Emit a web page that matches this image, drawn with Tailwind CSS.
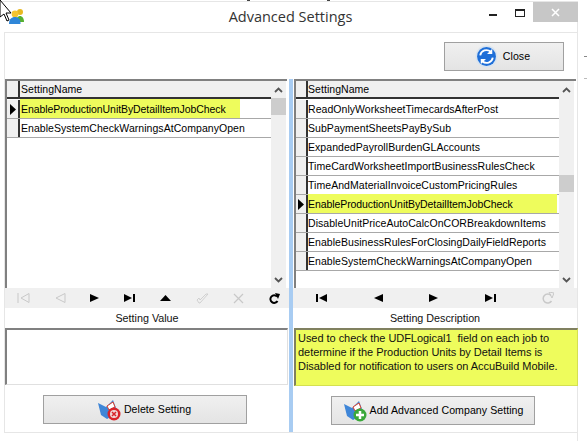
<!DOCTYPE html>
<html lang="en">
<head>
    <meta charset="UTF-8">
    <title>Advanced Settings</title>
    <script src="https://cdn.jsdelivr.net/npm/@tailwindcss/browser@4"></script>
</head>
<body class="bg-white overflow-hidden">
<div class="relative w-[587px] h-[441px] overflow-hidden bg-white text-black text-[10.5px] tracking-[0.05px] font-['Liberation_Sans',sans-serif]">

    <!-- Window -->
    <div class="w-[578px] h-[441px] mt-px border-t border-b border-r border-[#e6e6e6] flex flex-col">
        <!-- Title bar -->
        <div class="relative h-[30px] flex items-center justify-center text-[14.5px] tracking-normal text-[#333] font-['Open_Sans',sans-serif] pl-[4px]">
            Advanced Settings
            <svg class="absolute left-[8px] top-[6px] w-[16px] h-[17px]" viewBox="0 0 16 17">
                <circle cx="12" cy="4" r="3" fill="#e8b820"/>
                <path d="M8 14c0-4 2-6 4-6s4 2 4 6z" fill="#55b030"/>
                <circle cx="7" cy="6" r="3.4" fill="#f4c430"/>
                <path d="M1 16c0-5 2.500-7 6-7s5.500 2 5.500 7z" fill="#2f86d8"/>
            </svg>
            <div class="absolute left-[489px] top-[12px] w-[8px] h-[2px] bg-[#222]"></div>
            <div class="absolute left-[515px] top-[7px] w-[10px] h-[8px] border border-t-2 border-[#222]"></div>
            <div class="absolute left-[533px] top-0 w-[45px] h-[20px] bg-[#c7c7c7] flex items-center justify-center">
                <svg class="w-[9px] h-[9px]" viewBox="0 0 9 9"><path d="M1 1l7 7M8 1l-7 7" stroke="#fff" stroke-width="1.500"/></svg>
            </div>
        </div>

        <!-- Client area -->
        <div class="ml-[4px] w-[574px] h-[401px] border border-[#e6e6e6] flex flex-col">
            <div class="h-[46px] flex justify-end items-start pt-[9px] pr-[13px]">
                <button class="w-[120px] h-[29px] border border-[#a0a0a0] bg-gradient-to-b from-[#f0f0f0] to-[#e4e4e4] flex items-center justify-center gap-[5px] text-[10.6px] pr-[3px]">
                    <svg class="w-[23px] h-[23px]" viewBox="0 0 22 22">
                        <circle cx="11" cy="11" r="10.500" fill="#d8e4f0"/>
                        <circle cx="11" cy="11" r="9" fill="#1f6fd8"/>
                        <path d="M5 10a6 6 0 0 1 10-3.500M17 12a6 6 0 0 1-10 3.500" fill="none" stroke="#fff" stroke-width="1.800"/>
                        <path d="M16.500 3.500v5h-5zM5.500 18.500v-5h5z" fill="#fff"/>
                    </svg>
                    Close
                </button>
            </div>

            <div class="flex-1 flex">
                <!-- Left column -->
                <div class="w-[284px] shrink-0 flex flex-col">
                    <div class="h-[209px] mr-[2px] border-t-2 border-l-2 border-[#808080] flex bg-white">
                        <div class="flex-1 flex flex-col">
                            <div class="h-[19px] flex bg-[#f0f0f0] border-b border-white">
                                <div class="w-[13px] border-r-2 border-[#333] border-b-2 border-b-[#333]"></div>
                                <div class="flex-1 pl-[1px] leading-[17px] border-b-2 border-[#333]">SettingName</div>
                            </div>
                            <div class="h-[19px] flex border-b border-[#a8a8a8]">
                                <div class="w-[13px] bg-[#f0f0f0] border-r-2 border-[#333] flex items-center justify-center">
                                    <svg class="w-[6px] h-[11px]" viewBox="0 0 6 11"><path d="M0 0l6 5.500-6 5.500z" fill="#000"/></svg>
                                </div>
                                <div class="pl-[1px] pr-[14px] bg-[#eefc5c] leading-[20px] -mt-px h-[19px] tracking-[-0.08px]">EnableProductionUnitByDetailItemJobCheck</div>
                            </div>
                            <div class="h-[19px] flex border-b border-[#a8a8a8]">
                                <div class="w-[13px] bg-[#f0f0f0] border-r-2 border-[#333]"></div>
                                <div class="pl-[1px] leading-[18px]">EnableSystemCheckWarningsAtCompanyOpen</div>
                            </div>
                        </div>
                        <div class="w-[15px] mr-[1px] bg-[#f0f0f0] flex flex-col justify-between items-center relative">
                            <svg class="w-[9px] h-[6px] mt-[6px]" viewBox="0 0 9 6"><path d="M1 5l3.500-3.500L8 5" fill="none" stroke="#555" stroke-width="1.800"/></svg>
                            <div class="absolute top-[17px] left-0 w-[15px] h-[17px] bg-[#cdcdcd]"></div>
                            <svg class="w-[9px] h-[6px] mb-[5px]" viewBox="0 0 9 6"><path d="M1 1l3.500 3.500L8 1" fill="none" stroke="#555" stroke-width="1.800"/></svg>
                        </div>
                    </div>
                    <!-- Left navigator -->
                    <div class="h-[20px] bg-[#f0f0f0] flex items-center justify-between pl-[12px] pr-[9px]">
                        <svg class="w-[13px] h-[10px]" viewBox="0 0 13 10"><path d="M1 0v10M12 0.500L4 5l8 4.500z" fill="none" stroke="#c8c8c8"/></svg>
                        <svg class="w-[11px] h-[10px]" viewBox="0 0 11 10"><path d="M10 0.500L1 5l9 4.500z" fill="none" stroke="#c8c8c8"/></svg>
                        <svg class="w-[9px] h-[8px]" viewBox="0 0 9 8"><path d="M0 0l9 4-9 4z" fill="#000"/></svg>
                        <svg class="w-[11px] h-[8px]" viewBox="0 0 11 8"><path d="M0 0l8 4-8 4zM9 0h2v8H9z" fill="#000"/></svg>
                        <svg class="w-[11px] h-[6px]" viewBox="0 0 11 6"><path d="M0 6l5.500-6L11 6z" fill="#000"/></svg>
                        <svg class="w-[13px] h-[11px]" viewBox="0 0 13 11"><path d="M1 7l2 3 1 0L12 1l-2 0L4 7 3 5z" fill="none" stroke="#c8c8c8" stroke-width="0.800"/></svg>
                        <svg class="w-[11px] h-[11px]" viewBox="0 0 11 11"><path d="M1 1l9 9M10 1l-9 9" fill="none" stroke="#c8c8c8" stroke-width="1.200"/></svg>
                        <svg class="w-[11px] h-[11px]" viewBox="0 0 11 11"><path d="M8 3.500A3.800 3.800 0 1 0 8.500 8" fill="none" stroke="#000" stroke-width="2"/><path d="M6 0l5 1-2 5z" fill="#000"/></svg>
                    </div>
                    <div class="h-[20px] flex items-center justify-center text-[10.75px] tracking-normal text-[#111]">Setting Value</div>
                    <div class="h-[57px] mr-[1px] border-t-2 border-l-2 border-[#808080] border-r border-b border-r-[#e0e0e0] border-b-[#e0e0e0] bg-white"></div>
                    <div class="flex-1 flex items-start pt-[10px] pl-[38px]">
                        <button class="w-[204px] h-[29px] border border-[#a0a0a0] bg-gradient-to-b from-[#f0f0f0] to-[#e4e4e4] flex items-center justify-center gap-[3px] text-[10.6px] pr-[2px]">
                            <svg class="w-[24px] h-[22px]" viewBox="0 0 24 22">
                                <path d="M1 4l8 4 7-7 3 8v6l-9 5-6-4z" fill="#3f86d8"/>
                                <path d="M10 7l6-4 2 5-6 3z" fill="#fff" stroke="#d8402f"/>
                                <circle cx="17" cy="15" r="6.500" fill="#d8242a"/>
                                <circle cx="17" cy="15" r="4" fill="#f0d8d8"/>
                                <path d="M15 13l4 4M19 13l-4 4" stroke="#d8242a" stroke-width="1.500"/>
                            </svg>
                            Delete Setting
                        </button>
                    </div>
                </div>

                <!-- Splitter -->
                <div class="w-[4px] shrink-0 bg-[#a8ccf2]"></div>

                <!-- Right column -->
                <div class="flex-1 min-w-0 flex flex-col">
                    <div class="h-[209px] ml-[1px] mr-[1px] border-t-2 border-l-2 border-[#808080] flex bg-white">
                        <div class="flex-1 flex flex-col">
                            <div class="h-[19px] flex bg-[#f0f0f0] border-b border-white">
                                <div class="w-[12px] border-r-2 border-[#333] border-b-2 border-b-[#333]"></div>
                                <div class="flex-1 leading-[17px] border-b-2 border-[#333]">SettingName</div>
                            </div>
                            <div class="h-[19px] flex border-b border-[#a8a8a8]"><div class="w-[12px] bg-[#f0f0f0] border-r-2 border-[#333]"></div><div class="leading-[18px]">ReadOnlyWorksheetTimecardsAfterPost</div></div>
                            <div class="h-[19px] flex border-b border-[#a8a8a8]"><div class="w-[12px] bg-[#f0f0f0] border-r-2 border-[#333]"></div><div class="leading-[18px]">SubPaymentSheetsPayBySub</div></div>
                            <div class="h-[19px] flex border-b border-[#a8a8a8]"><div class="w-[12px] bg-[#f0f0f0] border-r-2 border-[#333]"></div><div class="leading-[18px]">ExpandedPayrollBurdenGLAccounts</div></div>
                            <div class="h-[19px] flex border-b border-[#a8a8a8]"><div class="w-[12px] bg-[#f0f0f0] border-r-2 border-[#333]"></div><div class="leading-[18px]">TimeCardWorksheetImportBusinessRulesCheck</div></div>
                            <div class="h-[19px] flex border-b border-[#a8a8a8]"><div class="w-[12px] bg-[#f0f0f0] border-r-2 border-[#333]"></div><div class="leading-[18px]">TimeAndMaterialInvoiceCustomPricingRules</div></div>
                            <div class="h-[19px] flex border-b border-[#a8a8a8]">
                                <div class="w-[12px] bg-[#f0f0f0] border-r-2 border-[#333] flex items-center justify-center">
                                    <svg class="w-[6px] h-[11px]" viewBox="0 0 6 11"><path d="M0 0l6 5.500-6 5.500z" fill="#000"/></svg>
                                </div>
                                <div class="pr-[44px] bg-[#eefc5c] leading-[20px] -mt-px h-[19px] tracking-[-0.08px]">EnableProductionUnitByDetailItemJobCheck</div>
                            </div>
                            <div class="h-[19px] flex border-b border-[#a8a8a8]"><div class="w-[12px] bg-[#f0f0f0] border-r-2 border-[#333]"></div><div class="leading-[18px]">DisableUnitPriceAutoCalcOnCORBreakdownItems</div></div>
                            <div class="h-[19px] flex border-b border-[#a8a8a8]"><div class="w-[12px] bg-[#f0f0f0] border-r-2 border-[#333]"></div><div class="leading-[18px]">EnableBusinessRulesForClosingDailyFieldReports</div></div>
                            <div class="h-[19px] flex border-b border-[#a8a8a8]"><div class="w-[12px] bg-[#f0f0f0] border-r-2 border-[#333]"></div><div class="leading-[18px]">EnableSystemCheckWarningsAtCompanyOpen</div></div>
                        </div>
                        <div class="w-[15px] mr-[2px] bg-[#f0f0f0] flex flex-col justify-between items-center relative">
                            <svg class="w-[9px] h-[6px] mt-[6px]" viewBox="0 0 9 6"><path d="M1 5l3.500-3.500L8 5" fill="none" stroke="#555" stroke-width="1.800"/></svg>
                            <div class="absolute top-[94px] left-0 w-[15px] h-[17px] bg-[#cdcdcd]"></div>
                            <svg class="w-[9px] h-[6px] mb-[5px]" viewBox="0 0 9 6"><path d="M1 1l3.500 3.500L8 1" fill="none" stroke="#555" stroke-width="1.800"/></svg>
                        </div>
                    </div>
                    <!-- Right navigator -->
                    <div class="h-[20px] bg-[#f0f0f0] flex items-center justify-between pl-[23px] pr-[23px]">
                        <svg class="w-[11px] h-[8px]" viewBox="0 0 11 8"><path d="M0 0h2v8H0zM11 0L3 4l8 4z" fill="#000"/></svg>
                        <svg class="w-[9px] h-[8px]" viewBox="0 0 9 8"><path d="M9 0L0 4l9 4z" fill="#000"/></svg>
                        <svg class="w-[9px] h-[8px]" viewBox="0 0 9 8"><path d="M0 0l9 4-9 4z" fill="#000"/></svg>
                        <svg class="w-[11px] h-[8px]" viewBox="0 0 11 8"><path d="M0 0l8 4-8 4zM9 0h2v8H9z" fill="#000"/></svg>
                        <svg class="w-[12px] h-[12px]" viewBox="0 0 12 12"><path d="M9 3.500A4.500 4.500 0 1 0 9.500 9" fill="none" stroke="#c8c8c8" stroke-width="1.500"/><path d="M7 0l5 1-2 5z" fill="none" stroke="#c8c8c8"/></svg>
                    </div>
                    <div class="h-[20px] flex items-center justify-center text-[10.75px] tracking-normal text-[#111]">Setting Description</div>
                    <div class="h-[58px] -mr-[1px] ml-[1px] bg-[#eefc5c] border-t-2 border-l-2 border-[#808060] border-r border-b border-r-[#d4e050] border-b-[#d4e050] pl-[2px] pt-[1px] text-[11px] leading-[14px] tracking-[-0.04px] text-[#111]">
                        Used to check the UDFLogical1&nbsp; field on each job to<br>
                        determine if the Production Units by Detail Items is<br>
                        Disabled for notification to users on AccuBuild Mobile.
                    </div>
                    <div class="flex-1 flex items-start pt-[10px] pl-[38px]">
                        <button class="w-[204px] h-[29px] border border-[#a0a0a0] bg-gradient-to-b from-[#f0f0f0] to-[#e4e4e4] flex items-center justify-center gap-[3px] text-[10.6px]">
                            <svg class="w-[24px] h-[22px]" viewBox="0 0 24 22">
                                <path d="M1 4l8 4 7-7 3 8v6l-9 5-6-4z" fill="#3f86d8"/>
                                <path d="M10 7l6-4 2 5-6 3z" fill="#fff" stroke="#d8402f"/>
                                <circle cx="17" cy="15" r="6.500" fill="#3aa83a"/>
                                <path d="M17 11v8M13 15h8" stroke="#fff" stroke-width="2.500"/>
                            </svg>
                            Add Advanced Company Setting
                        </button>
                    </div>
                </div>
            </div>
        </div>
    </div>

    <!-- Mouse cursor -->
    <svg class="absolute left-0 top-0 w-[14px] h-[22px]" viewBox="0 0 14 22">
        <path d="M0 0l11 13H6l3 7-2 1-3-7-4 3z" fill="#fff" stroke="#000"/>
    </svg>
    <!-- Bits of whatever sits behind the window -->
    <div class="absolute left-[247px] top-0 w-[3px] h-px bg-[#444]"></div>
    <div class="absolute left-[327px] top-0 w-[3px] h-px bg-[#444]"></div>
    <div class="absolute left-[584px] top-[56px] w-[3px] h-px bg-[#888]"></div>
    <div class="absolute left-[584px] top-[78px] w-[3px] h-px bg-[#bbb]"></div>
</div>
</body>
</html>
